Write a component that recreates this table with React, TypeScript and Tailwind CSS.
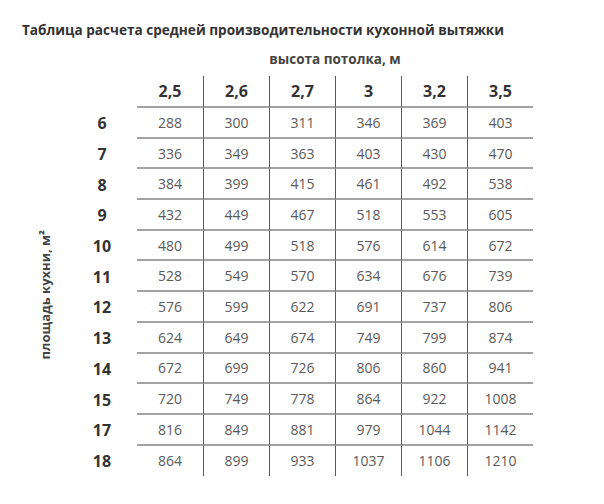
import React from 'react';

const HEIGHTS = ['2,5', '2,6', '2,7', '3', '3,2', '3,5'];

const ROWS: [string, number[]][] = [
  ['6', [288, 300, 311, 346, 369, 403]],
  ['7', [336, 349, 363, 403, 430, 470]],
  ['8', [384, 399, 415, 461, 492, 538]],
  ['9', [432, 449, 467, 518, 553, 605]],
  ['10', [480, 499, 518, 576, 614, 672]],
  ['11', [528, 549, 570, 634, 676, 739]],
  ['12', [576, 599, 622, 691, 737, 806]],
  ['13', [624, 649, 674, 749, 799, 874]],
  ['14', [672, 699, 726, 806, 860, 941]],
  ['15', [720, 749, 778, 864, 922, 1008]],
  ['17', [816, 849, 881, 979, 1044, 1142]],
  ['18', [864, 899, 933, 1037, 1106, 1210]],
];

export default function App() {
  return (
    <div className="w-[604px] h-[504px] bg-white text-[#333] font-['Open_Sans',sans-serif] overflow-hidden">
      <h1 className="pl-[22px] pt-[20px] text-[13.6px] font-bold leading-[20px] text-[#333]">
        Таблица расчета средней производительности кухонной вытяжки
      </h1>

      <div className="flex mt-[2px]">
        {/* vertical axis label */}
        <div className="w-[85px] flex flex-col">
          <div className="h-[72px]" />
          <div className="flex-1 flex items-center justify-center pl-[6px]">
            <span className="[writing-mode:vertical-rl] rotate-180 text-[13px] font-bold text-[#444] whitespace-nowrap">
              площадь кухни, м²
            </span>
          </div>
        </div>

        <div className="flex flex-col">
          <div className="ml-[52px] w-[396px] text-center text-[13.5px] font-bold text-[#444] leading-[18px] pt-[8px] pb-[8px]">
            высота потолка, м
          </div>

          <div className="grid grid-cols-[52px_repeat(6,66px)]">
            <div />
            {HEIGHTS.map((h, i) => (
              <div
                key={h}
                className={
                  'h-[32px] flex items-center justify-center text-[16px] font-bold text-[#333] border-b-2 border-b-[#a3a3a3] ' +
                  (i > 0 ? 'border-l border-l-[#5a5a5a]' : '')
                }
              >
                {h}
              </div>
            ))}

            {ROWS.map(([area, vals], r) => (
              <React.Fragment key={area}>
                <div className="h-[30.7px] flex items-center justify-center pr-[18px] text-[16px] font-bold text-[#333]">
                  {area}
                </div>
                {vals.map((v, i) => (
                  <div
                    key={i}
                    className={
                      'h-[30.7px] flex items-center justify-center text-[14px] text-[#5a5a5a] ' +
                      (r < ROWS.length - 1 ? 'border-b-2 border-b-[#a3a3a3] ' : '') +
                      (i > 0 ? 'border-l border-l-[#5a5a5a]' : '')
                    }
                  >
                    {v}
                  </div>
                ))}
              </React.Fragment>
            ))}
          </div>
        </div>
      </div>
    </div>
  );
}
